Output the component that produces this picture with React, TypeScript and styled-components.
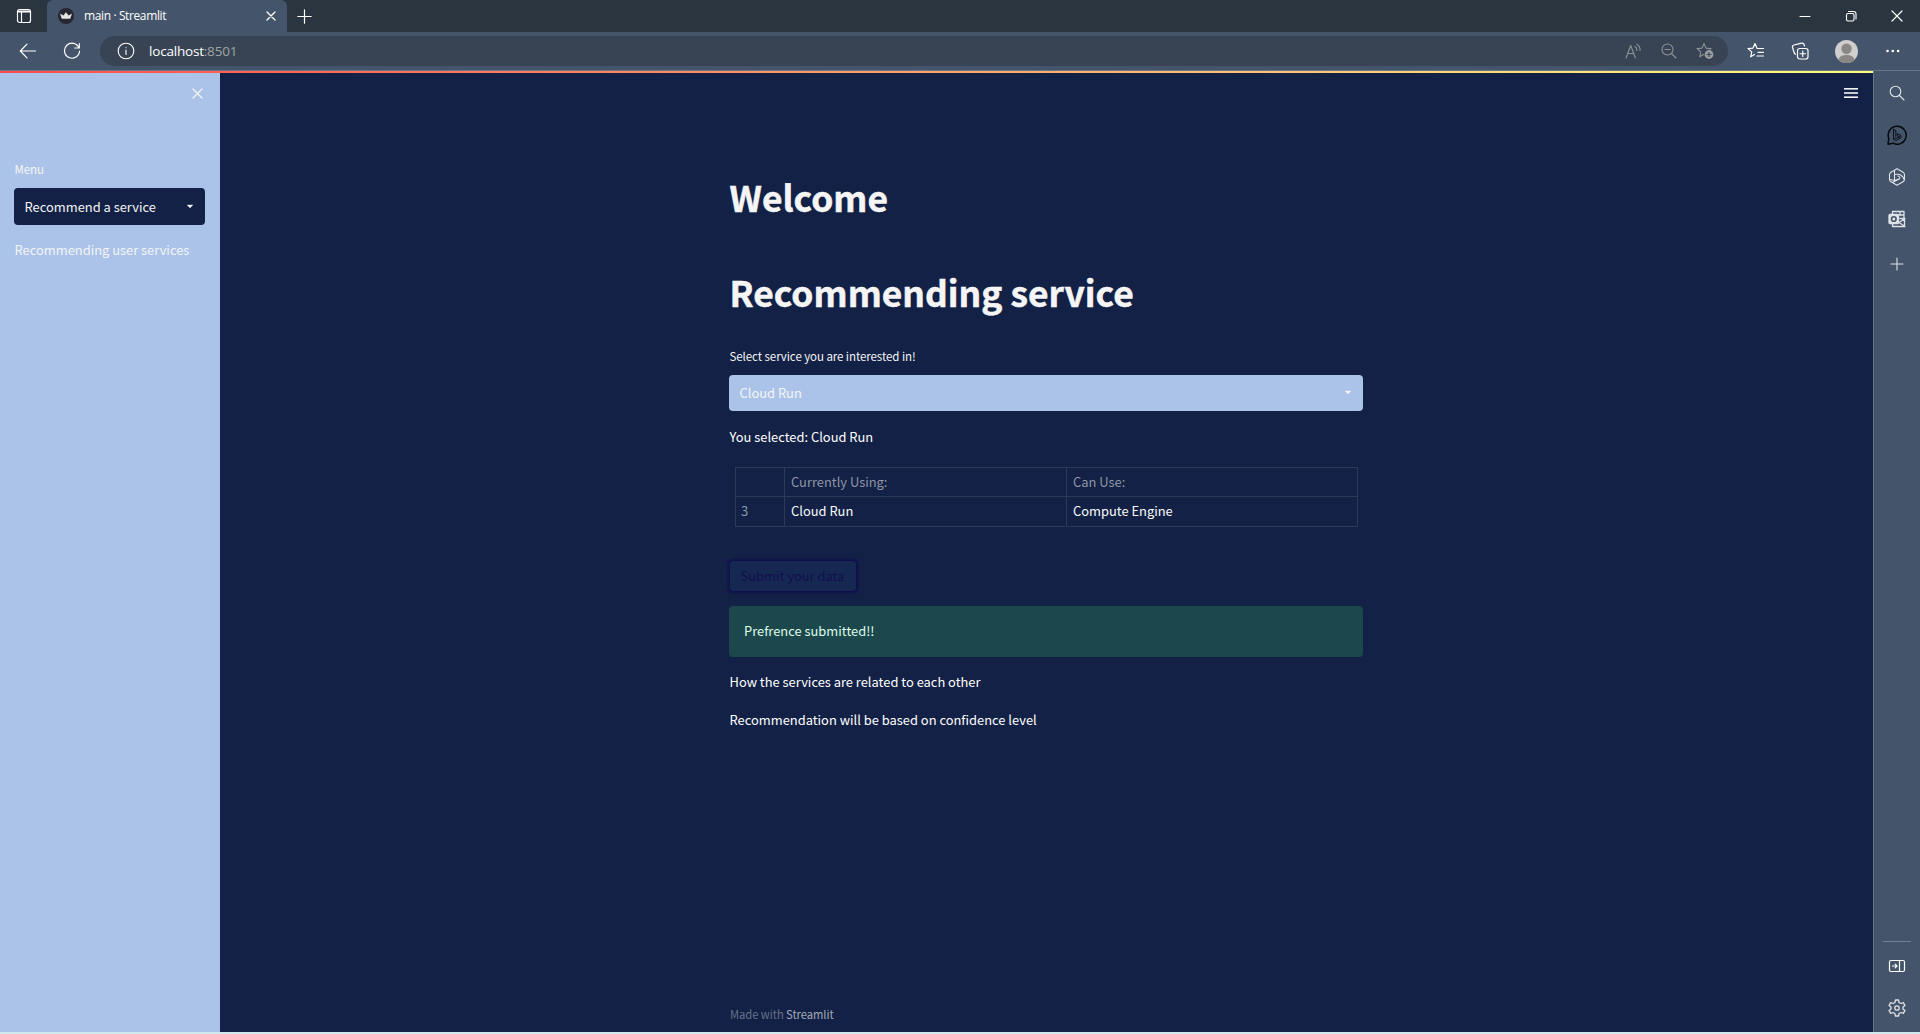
import React from "react";
import styled, { createGlobalStyle } from "styled-components";

const Global = createGlobalStyle`
  * { box-sizing: border-box; }
  html, body { margin: 0; padding: 0; overflow: hidden; background: #cfe9ef; }
  svg { display: block; flex: none; }
`;

const sans = `"Noto Sans CJK SC", "Noto Sans", sans-serif`;
const ui = `"Open Sans", "Noto Sans", sans-serif`;

const Window = styled.div`
  width: 1920px;
  height: 1034px;
  display: flex;
  flex-direction: column;
  font-family: ${sans};
  color: #fff;
  border-bottom: 2px solid #cfe9ef;
`;

const TabStrip = styled.header`
  height: 32px;
  flex: none;
  display: flex;
  background: #2a3540;
`;

const TabActions = styled.div`
  width: 47px;
  display: flex;
  align-items: center;
  padding-left: 16px;
`;

const Tab = styled.div`
  width: 240px;
  display: flex;
  align-items: center;
  padding: 0 11px;
  background: #44546a;
  border-radius: 6px 6px 0 0;
`;

const TabTitle = styled.span`
  flex: 1;
  margin-left: 10px;
  font: 12px/18px ${ui};
  letter-spacing: -0.38px;
`;

const NewTab = styled.div`
  display: flex;
  align-items: center;
  padding-left: 10px;
`;

const WindowButtons = styled.div`
  margin-left: auto;
  display: flex;
  align-items: center;
  & > * {
    width: 46px;
    display: flex;
    justify-content: center;
  }
`;

const Toolbar = styled.div`
  height: 39px;
  flex: none;
  display: flex;
  align-items: center;
  padding: 0 19px;
  background: #44546a;
  border-bottom: 1px solid #67768a;
`;

const ReloadIcon = styled.svg`
  margin-left: 26px;
`;

const AddressBar = styled.div`
  width: 1628px;
  height: 30px;
  margin-left: 19px;
  display: flex;
  align-items: center;
  padding: 0 13px 0 17px;
  background: #384454;
  border-radius: 15px;
`;

const Url = styled.span`
  flex: 1;
  margin-left: 14px;
  font: 13.5px/20px ${ui};
  letter-spacing: -0.2px;
`;

const Port = styled.span`
  color: #a0a3a6;
`;

const AddressIcons = styled.div`
  display: flex;
  align-items: center;
  gap: 19px;
  color: #8e9296;
`;

const ToolIcons = styled.div`
  display: flex;
  align-items: center;
  gap: 26px;
  margin-left: 19px;
`;

const Body = styled.div`
  flex: 1;
  display: flex;
  min-height: 0;
`;

const Page = styled.div`
  width: 1873px;
  display: flex;
  flex-direction: column;
  background: #122145;
`;

const Decoration = styled.div`
  height: 2px;
  flex: none;
  background: linear-gradient(90deg, #ff4b4b, #fffd80);
`;

const PageRow = styled.div`
  flex: 1;
  display: flex;
`;

const Sidebar = styled.aside`
  width: 220px;
  background: #abc3e8;
  color: #f3f4f6;
  padding: 15px 15px 0 14px;
`;

const CloseRow = styled.div`
  display: flex;
  justify-content: flex-end;
  height: 71px;
  padding-right: 2px;
`;

const Main = styled.main`
  flex: 1;
  display: flex;
  justify-content: space-between;
  padding-left: 509px;
`;

const Column = styled.div`
  width: 634px;
  display: flex;
  flex-direction: column;
  padding-top: 100px;
`;

const MenuButton = styled.div`
  padding: 15px 15px 0 0;
`;

const Title = styled.h1`
  margin: 0 0 47px 0.5px;
  font: 700 35.4px/48px ${sans};
  color: #f5f5f5;
  -webkit-text-stroke: 0.5px #f5f5f5;
  white-space: nowrap;
`;

const Label = styled.div<{ $top?: number }>`
  margin: ${(p) => p.$top ?? 0}px 0 0 0.5px;
  font-size: 11.5px;
  line-height: 20px;
  letter-spacing: -0.07px;
  color: #f5f5f5;
  white-space: nowrap;
`;

const Text = styled.p<{ $top: number }>`
  margin: ${(p) => p.$top}px 0 0 0.5px;
  font-size: 12.9px;
  line-height: 24px;
  white-space: nowrap;
`;

const Select = styled.div<{ $bg: string; $height: number; $top: number }>`
  height: ${(p) => p.$height}px;
  margin-top: ${(p) => p.$top}px;
  display: flex;
  align-items: center;
  justify-content: space-between;
  padding: 0 11px 1px 10.5px;
  border-radius: 4px;
  background: ${(p) => p.$bg};
  color: #f5f5f5;
  font-size: 12.9px;
`;

const Table = styled.div`
  display: grid;
  grid-template-columns: 49px 282px 291px;
  grid-template-rows: 29px 30px;
  width: 623px;
  margin: 18px 0 0 6px;
  border-top: 1px solid #2c3957;
  border-left: 1px solid #2c3957;
`;

const Cell = styled.div<{ $muted?: boolean; $index?: boolean }>`
  padding-left: ${(p) => (p.$index ? 5 : 6)}px;
  border-right: 1px solid #2c3957;
  border-bottom: 1px solid #2c3957;
  font-size: 12.9px;
  line-height: 28px;
  color: ${(p) => (p.$muted ? "#8f96a6" : "#fafafa")};
`;

const Submit = styled.button`
  width: 128px;
  height: 32px;
  margin: 33px 0 0 -0.5px;
  padding: 0;
  border: 1px solid #110c4c;
  border-radius: 4px;
  background: #152852;
  box-shadow: 0 0 0 2px rgba(17, 12, 76, 0.45);
  color: #140e4e;
  font: 12.9px/28px ${sans};
`;

const Alert = styled.div`
  height: 51px;
  margin-top: 14px;
  padding: 12px 15px;
  border-radius: 4px;
  background: #1c474d;
  color: #dffde9;
  font-size: 12.9px;
  line-height: 26px;
`;

const Footer = styled.footer`
  margin: auto 0 8px 1px;
  font-size: 11.2px;
  line-height: 20px;
  letter-spacing: -0.05px;
  color: #66718a;
`;

const Brand = styled.span`
  color: #a4abb9;
`;

const EdgeBar = styled.nav`
  width: 47px;
  display: flex;
  flex-direction: column;
  align-items: center;
  padding: 12px 0 14px;
  background: #44546a;
  border-left: 1px solid #67768a;
  color: #dfe2e6;
`;

const Slot = styled.div<{ $gap: number }>`
  height: 20px;
  margin-bottom: ${(p) => p.$gap}px;
  display: flex;
  align-items: center;
`;

const Divider = styled.div`
  width: 28px;
  height: 1px;
  margin: auto 0 14px;
  background: #728094;
`;

type IconProps = { size?: number; w?: number; color?: string; children: React.ReactNode };
const Icon = ({ size = 20, w = 1.1, color = "currentColor", children }: IconProps) => (
  <svg width={size} height={size} viewBox={`0 0 ${size} ${size}`} fill="none" stroke={color} strokeWidth={w} strokeLinecap="round" strokeLinejoin="round">
    {children}
  </svg>
);

const Cross = ({ size, w, color }: { size: number; w?: number; color?: string }) => (
  <Icon size={size} w={w} color={color}>
    <path d={`M1 1L${size - 1} ${size - 1}M${size - 1} 1L1 ${size - 1}`} />
  </Icon>
);

const Caret = () => (
  <svg width="8" height="5" viewBox="0 0 8 5">
    <path d="M1.200 1h5.600L4 3.900z" fill="#f5f5f5" stroke="#f5f5f5" strokeWidth="0.4" />
  </svg>
);

const star = "M8 1.5l2 4.6 5 .5-3.8 3.3 1.1 4.9L8 12.2l-4.3 2.6 1.1-4.9L1 6.6l5-.5z";

export default function App() {
  return (
    <>
      <Global />
      <Window>
        <TabStrip>
          <TabActions>
            <Icon size={16} w={1.2}>
              <rect x="1.500" y="1.500" width="13" height="13" rx="2" />
              <path d="M2 3h12M2 4h12M5.500 4v10" />
            </Icon>
          </TabActions>
          <Tab>
            <svg width="16" height="16" viewBox="0 0 16 16">
              <circle cx="8" cy="8" r="8" fill="#262730" />
              <path d="M2 5.400l3.400 2L8 4.200l2.600 3.200 3.400-2-1.800 5.400H3.800z" fill="#e4e4e6" />
            </svg>
            <TabTitle>main · Streamlit</TabTitle>
            <Cross size={10} w={1.3} />
          </Tab>
          <NewTab>
            <Icon size={15} w={1.2}>
              <path d="M7.500 .8v13.400M.8 7.500h13.400" />
            </Icon>
          </NewTab>
          <WindowButtons>
            <div>
              <Icon size={12}><path d="M1 6.500h10" /></Icon>
            </div>
            <div>
              <Icon size={12}>
                <rect x="1.500" y="3.500" width="7.500" height="7.500" rx="1.500" />
                <path d="M3.500 1.500h5a2.500 2.500 0 0 1 2.500 2.500v5" />
              </Icon>
            </div>
            <div>
              <Cross size={12} w={1.2} />
            </div>
          </WindowButtons>
        </TabStrip>

        <Toolbar>
          <Icon size={18} w={1.2}><path d="M1.500 9h15M8 2.200L1.300 9 8 15.800" /></Icon>
          <ReloadIcon width="18" height="18" viewBox="0 0 18 18" fill="none" stroke="#fff" strokeWidth="1.2" strokeLinecap="round" strokeLinejoin="round">
            <path d="M16 6A7.500 7.500 0 1 0 16.500 9M16.300 1.500V6h-4.500" />
          </ReloadIcon>
          <AddressBar>
            <Icon size={18} w={1.1}>
              <circle cx="9" cy="9" r="7.800" />
              <path d="M9 8v4.500M9 5.500v.3" />
            </Icon>
            <Url>
              localhost<Port>:8501</Port>
            </Url>
            <AddressIcons>
              <Icon size={17}>
                <path d="M1 15L5.700 2.500 10.400 15M2.700 10.500h6M10 3.500q2 1.200 1.800 4M11.800 1.200q3.600 2 3.200 6.300" />
              </Icon>
              <Icon size={16}>
                <circle cx="6.500" cy="6.500" r="5.500" />
                <path d="M10.500 10.500L15 15M4 6.500h5" />
              </Icon>
              <svg width="19" height="18" viewBox="0 0 19 18" fill="none" stroke="currentColor" strokeWidth="1.1" strokeLinejoin="round">
                <path d={star} />
                <circle cx="13" cy="12.500" r="5" fill="#384454" stroke="none" />
                <circle cx="13" cy="12.500" r="4.400" fill="#9b9d9f" stroke="none" />
                <path d="M13 10v5M10.500 12.500h5" stroke="#384454" />
              </svg>
            </AddressIcons>
          </AddressBar>
          <ToolIcons>
            <Icon size={18} w={1.200}>
              <path d="M9.800 5.800L8 1.500 6 6.100l-5 .5 3.800 3.300-1.100 4.900L7.500 12.500M10 6.500h6.500M11 10.300h5.500M10 14h6.500" />
            </Icon>
            <Icon size={18} w={1.200}>
              <rect x="6.500" y="6.500" width="10.500" height="10.500" rx="2.200" />
              <path d="M11.750 9v5.500M9 11.750h5.500M13.500 4l-.5-1.500a2 2 0 0 0-2.500-1.300L3 3a2 2 0 0 0-1.500 2.500L3.300 11a2 2 0 0 0 1.200 1.300" />
            </Icon>
            <svg width="23" height="23" viewBox="0 0 23 23">
              <defs>
                <clipPath id="avatar"><circle cx="11.500" cy="11.500" r="11.500" /></clipPath>
              </defs>
              <g clipPath="url(#avatar)">
                <rect width="23" height="23" fill="#d1cfcd" />
                <circle cx="11.500" cy="8.700" r="5.200" fill="#8a8785" />
                <ellipse cx="11.500" cy="20" rx="8" ry="5.200" fill="#8a8785" />
              </g>
            </svg>
            <Icon size={16} w={0}>
              <g fill="#fff"><circle cx="3.500" cy="8" r="1.300" /><circle cx="8.800" cy="8" r="1.300" /><circle cx="14.100" cy="8" r="1.300" /></g>
            </Icon>
          </ToolIcons>
        </Toolbar>

        <Body>
          <Page>
            <Decoration />
            <PageRow>
              <Sidebar>
                <CloseRow>
                  <Cross size={11} w={1.300} />
                </CloseRow>
                <Label>Menu</Label>
                <Select $bg="#122145" $height={37} $top={9}>
                  Recommend a service
                  <Caret />
                </Select>
                <Text $top={13}>Recommending user services</Text>
              </Sidebar>
              <Main>
                <Column>
                  <Title>Welcome</Title>
                  <Title>Recommending service</Title>
                  <Label $top={-17}>Select service you are interested in!</Label>
                  <Select $bg="#abc3e8" $height={36} $top={9}>
                    Cloud Run
                    <Caret />
                  </Select>
                  <Text $top={14}>You selected: Cloud Run</Text>
                  <Table>
                    <Cell />
                    <Cell $muted>Currently Using:</Cell>
                    <Cell $muted>Can Use:</Cell>
                    <Cell $muted $index>3</Cell>
                    <Cell>Cloud Run</Cell>
                    <Cell>Compute Engine</Cell>
                  </Table>
                  <Submit>Submit your data</Submit>
                  <Alert>Prefrence submitted!!</Alert>
                  <Text $top={13}>How the services are related to each other</Text>
                  <Text $top={14}>Recommendation will be based on confidence level</Text>
                  <Footer>
                    Made with <Brand>Streamlit</Brand>
                  </Footer>
                </Column>
                <MenuButton>
                  <svg width="14" height="10" viewBox="0 0 14 10" fill="#f5f5f5">
                    <rect width="14" height="1.600" /><rect y="4" width="14" height="2" opacity=".8" /><rect y="8.400" width="14" height="1.600" />
                  </svg>
                </MenuButton>
              </Main>
            </PageRow>
          </Page>
          <EdgeBar>
            <Slot $gap={22}>
              <Icon size={16}><circle cx="6.500" cy="6.500" r="5.300" /><path d="M10.500 10.500L15 15" /></Icon>
            </Slot>
            <Slot $gap={22}>
              <Icon size={20} w={1.500} color="#070b10">
                <path d="M1 19.200L1.800 13.500A9 9 0 1 1 6 18.200z" />
                <path d="M6.500 4.500v9.700l2.300 1.500 5.200-3v-2.200L9.800 8.700l1.200 2.600 1.800.7-6 2.200M6.500 4.500l2.300 1v6.500" strokeWidth="0.9" />
              </Icon>
            </Slot>
            <Slot $gap={22}>
              <Icon size={18} w={1.100}>
                <path d="M9 .8l6 3.500q1.500.9 1.500 2.500v4.400q0 1.600-1.500 2.500L9 17.200l-6-3.500q-1.500-.9-1.500-2.500V6.800q0-1.600 1.500-2.500z" />
                <path d="M6.500 3v9.500M7 6.500q4-.8 6 .8 2.500 1.800 3 4M1.800 11.500l4.700 1 5-1.800q.8-2-1.500-2.700M11.500 10.700L4.500 14.500" />
              </Icon>
            </Slot>
            <Slot $gap={25}>
              <Icon size={18} w={1.300}>
                <path d="M4.500 4V1.500H16V8M7 5h9M12 1.500v3.500M12 8.500h4.500v8H4.500V14M11 12.500L17 16.500M17 8.500l-6 4" />
                <rect x="1" y="4.500" width="9.500" height="9" rx="1" fill="#dfe2e6" />
                <circle cx="5.800" cy="9" r="2.300" stroke="#44546a" strokeWidth="1.600" />
              </Icon>
            </Slot>
            <Slot $gap={0}>
              <Icon size={14}><path d="M7 1v12M1 7h12" /></Icon>
            </Slot>
            <Divider />
            <Slot $gap={22}>
              <Icon size={18} w={1.200} color="#fff">
                <rect x="1.500" y="3.500" width="15" height="11" rx="1.500" />
                <path d="M11.500 3.500v11M4.500 9h4.500M7.200 7.200L9 9l-1.800 1.800" />
              </Icon>
            </Slot>
            <Slot $gap={0}>
              <Icon size={18} w={1.300}>
                <path d="M7.500 1h3l.6 2.500 1.800 1 2.400-.8 1.600 2.700L15 8.100v1.800l1.900 1.700-1.600 2.700-2.400-.8-1.800 1-.6 2.500h-3l-.6-2.500-1.800-1-2.400.8-1.600-2.700L3 9.900V8.100L1.100 6.400l1.600-2.700 2.400.8 1.800-1z" />
                <circle cx="9" cy="9" r="2.200" />
              </Icon>
            </Slot>
          </EdgeBar>
        </Body>
      </Window>
    </>
  );
}
